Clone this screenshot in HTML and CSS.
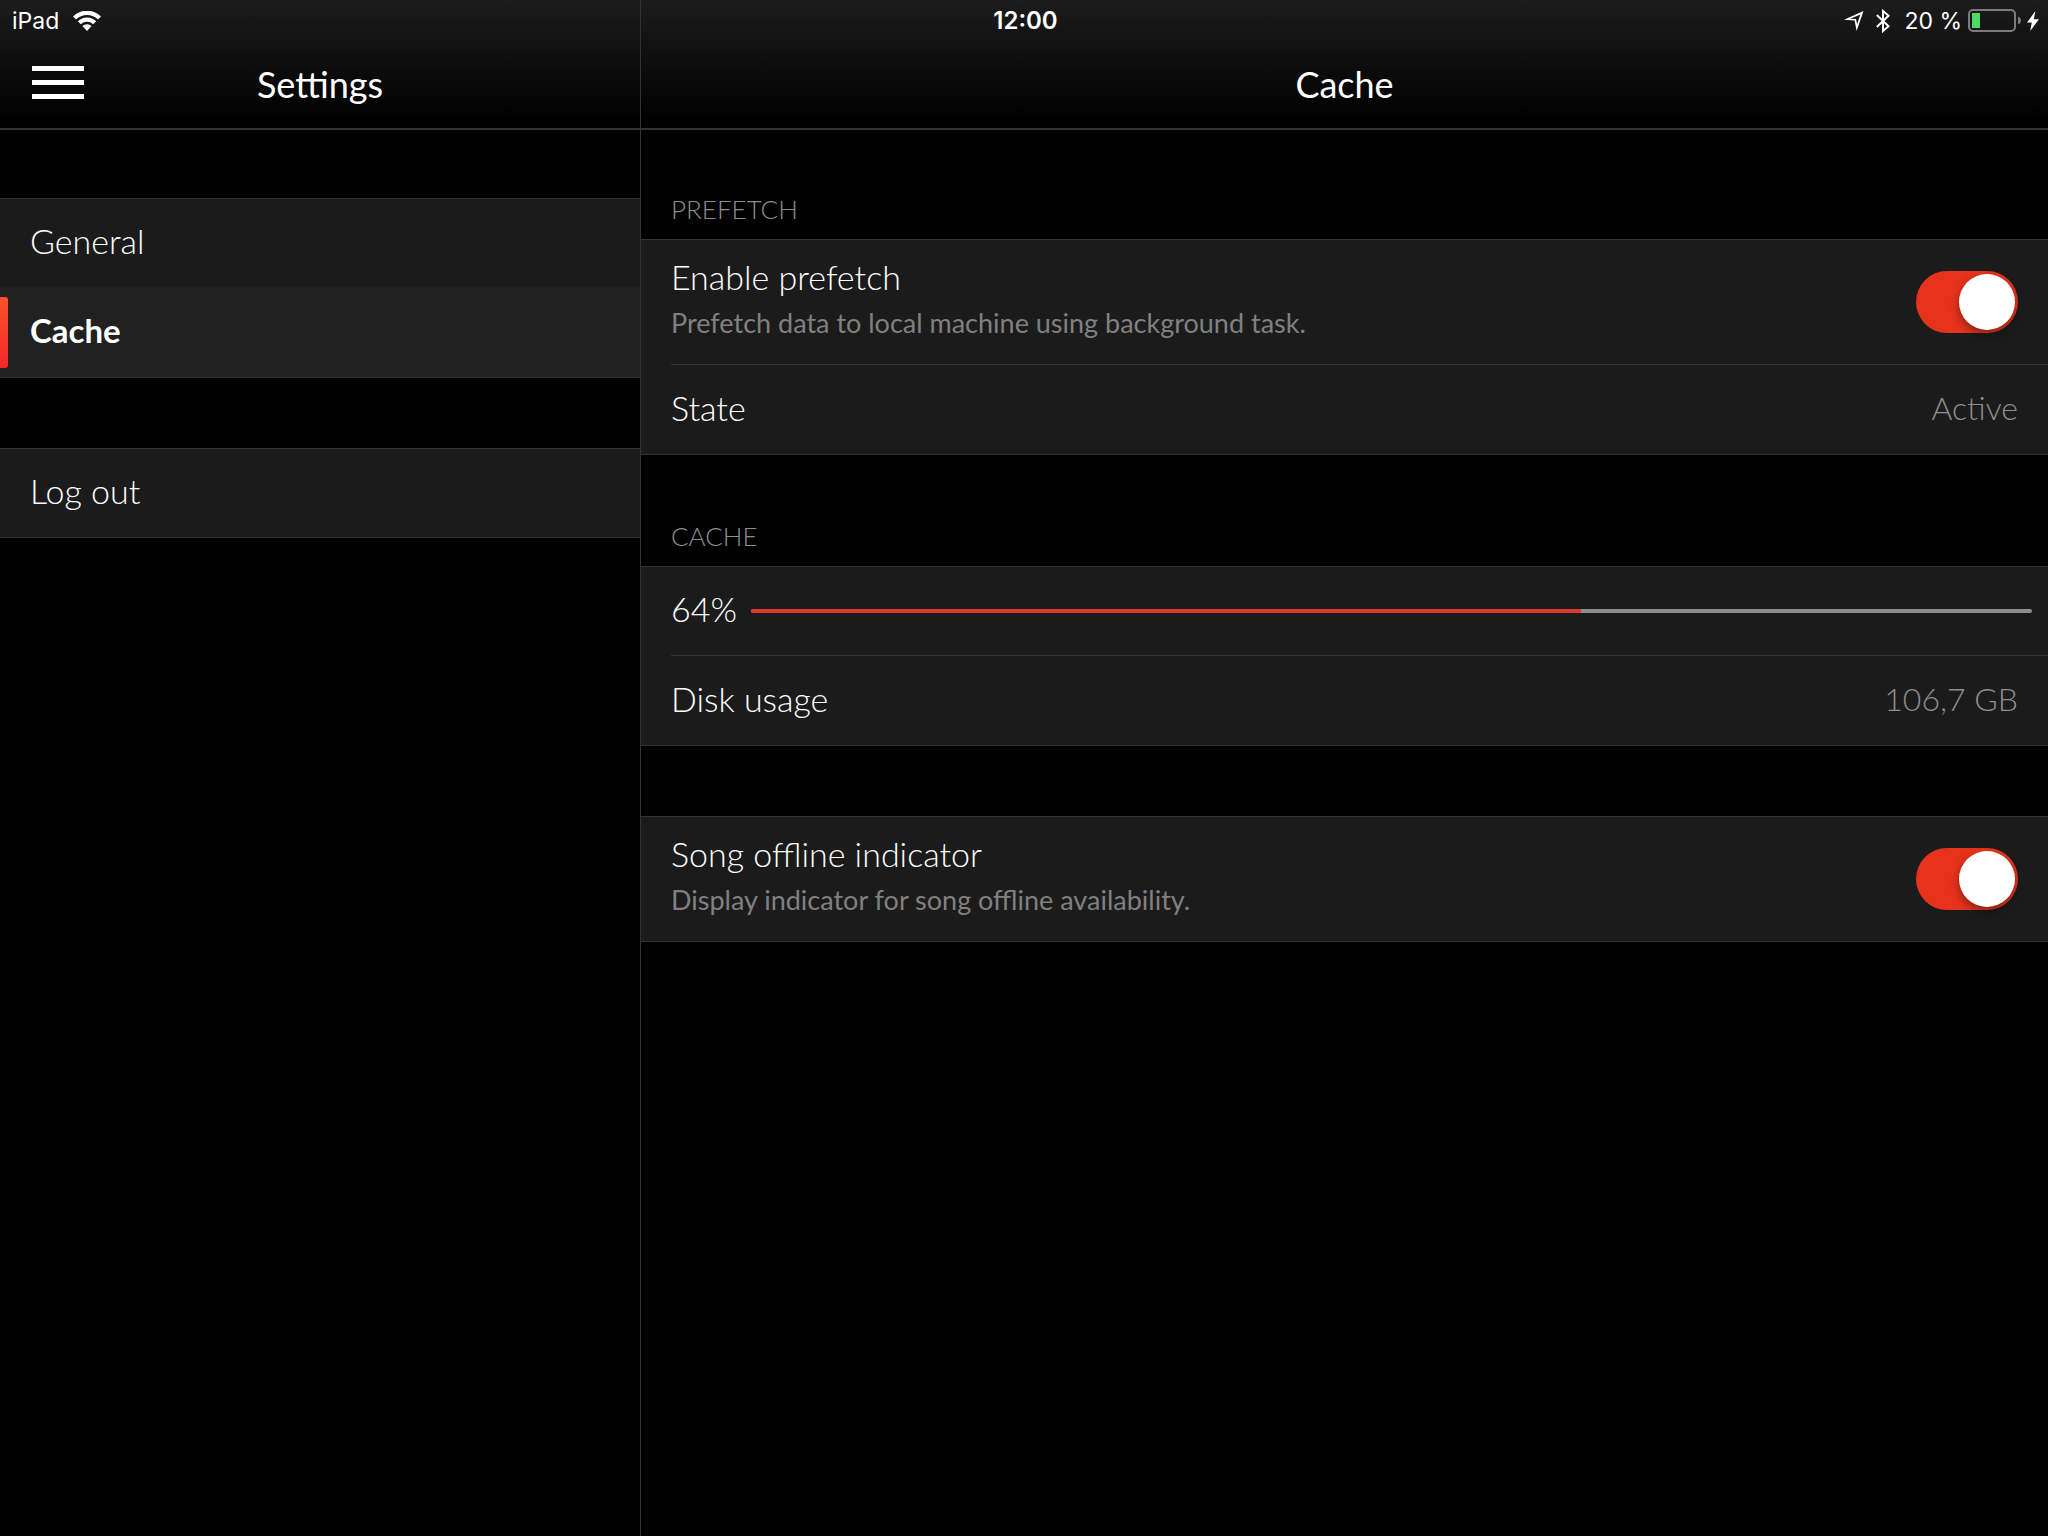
FILE: index.html
```html
<!DOCTYPE html>
<html lang="en">
<head>
<meta charset="utf-8">
<meta name="viewport" content="width=device-width, initial-scale=1">
<title>Settings – Cache</title>
<link rel="stylesheet" href="styles.css">
</head>
<body>
<div class="status-bar">
  <div class="status-left">
    <span>iPad</span>
    <svg class="icon-wifi" width="28" height="20" viewBox="0 0 28 20" aria-hidden="true">
      <path d="M0 5.4A20 20 0 0 1 28 5.4L25 8.5A15.6 15.6 0 0 0 3 8.5Z"/>
      <path d="M4.8 10.3A13 13 0 0 1 23.2 10.3L20.2 13.3A9 9 0 0 0 7.8 13.3Z"/>
      <path d="M9.4 15.1A6.6 6.6 0 0 1 18.6 15.1L14 20Z"/>
    </svg>
  </div>
  <time class="clock">12:00</time>
  <div class="status-right">
    <svg class="icon-location" width="20" height="20" viewBox="0 0 20 20" aria-hidden="true">
      <path fill-rule="evenodd" d="M19.5 0 12.6 20 10.6 9.4 0 8.8ZM16.4 3.6 6.2 7.8 12 8.1 13.1 13.2Z"/>
    </svg>
    <svg class="icon-bluetooth" width="14" height="24" viewBox="0 0 14 24" aria-hidden="true">
      <path d="M0.8 6 12.6 17.2 7 22V2L12.6 6.8 0.8 18"/>
    </svg>
    <span>20 %</span>
    <svg class="icon-battery" width="54" height="24" viewBox="0 0 54 24" aria-hidden="true">
      <rect class="battery-case" x="1" y="1" width="46" height="21" rx="4"/>
      <rect class="battery-charge" x="4" y="4" width="8" height="15"/>
      <path class="battery-cap" d="M50 7.5C54 9 54 14 50 15.5Z"/>
    </svg>
    <svg class="icon-bolt" width="12" height="20" viewBox="0 0 12 20" aria-hidden="true">
      <path d="M8.4 0 0 11.4H4.8L3.2 20 12 8.2H6.8Z"/>
    </svg>
  </div>
</div>

<div class="split-view">
  <aside class="pane">
    <header class="nav-bar">
      <button class="menu-button" type="button" aria-label="Menu"><span></span><span></span><span></span></button>
      <h1 class="title">Settings</h1>
    </header>
    <nav>
      <div class="group">
        <a class="item" href="#general">General</a>
        <a class="item selected" href="#cache" aria-current="page">Cache</a>
      </div>
      <div class="group">
        <a class="item" href="#logout">Log out</a>
      </div>
    </nav>
  </aside>

  <main class="pane detail">
    <header class="nav-bar">
      <h2 class="title">Cache</h2>
    </header>

    <section>
      <h3 class="section-title">Prefetch</h3>
      <div class="group">
        <div class="row tall">
          <label class="texts" for="prefetch">
            <span class="name">Enable prefetch</span>
            <span class="hint">Prefetch data to local machine using background task.</span>
          </label>
          <input class="switch" id="prefetch" type="checkbox" checked>
        </div>
        <div class="row">
          <span class="name">State</span>
          <span class="value">Active</span>
        </div>
      </div>
    </section>

    <section>
      <h3 class="section-title">Cache</h3>
      <div class="group">
        <div class="row progress-row">
          <label class="name" for="cache-fill">64%</label>
          <progress class="meter" id="cache-fill" max="1000" value="648"></progress>
        </div>
        <div class="row">
          <span class="name">Disk usage</span>
          <span class="value">106,7 GB</span>
        </div>
      </div>
    </section>

    <section>
      <div class="group">
        <div class="row tall">
          <label class="texts" for="indicator">
            <span class="name">Song offline indicator</span>
            <span class="hint">Display indicator for song offline availability.</span>
          </label>
          <input class="switch" id="indicator" type="checkbox" checked>
        </div>
      </div>
    </section>
  </main>
</div>
</body>
</html>
```
FILE: styles.css
```css
:root {
  --line: #333;
  --surface: #1b1b1b;
  --surface-selected: #212121;
  --muted: #8e8e8e;
  --accent: #e7331c;
}

* {
  box-sizing: border-box;
}

body {
  margin: 0;
  background: #000;
  color: #fff;
  font-family: Lato, "Open Sans", sans-serif;
  font-size: 34px;
  font-weight: 300;
  line-height: 44px;
}

h1, h2, h3 {
  margin: 0;
}

/* Status bar floats over both panes */
.status-bar {
  position: absolute;
  top: 0;
  left: 0;
  right: 0;
  z-index: 1;
  display: grid;
  grid-template-columns: 1fr auto 1fr;
  align-items: center;
  height: 42px;
  padding: 0 9px 0 12px;
  font-family: Inter, "Liberation Sans", sans-serif;
  font-size: 23px;
  font-weight: 400;
  line-height: 40px;
}

.status-bar svg {
  fill: #fff;
}

.status-left,
.status-right {
  display: flex;
  align-items: center;
}

.status-left {
  gap: 14px;
}

.status-right {
  justify-content: flex-end;
}

.clock {
  font-size: 24px;
  font-weight: 600;
}

.icon-location {
  margin-right: 12px;
}

.status-bar .icon-bluetooth {
  margin-right: 14px;
  fill: none;
  stroke: #fff;
  stroke-width: 2;
}

.icon-battery {
  margin: 0 5px 0 6px;
}

.status-bar .battery-case {
  fill: none;
  stroke: #7c7c7c;
  stroke-width: 2;
}

.status-bar .battery-charge {
  fill: #4cd964;
}

.status-bar .battery-cap {
  fill: #7c7c7c;
}

/* Panes */
.split-view {
  display: grid;
  grid-template-columns: 5fr 11fr;
  min-height: 100vh;
}

.detail {
  border-left: 1px solid var(--line);
}

.nav-bar {
  display: grid;
  grid-template-columns: 1fr auto 1fr;
  align-items: center;
  height: 128px;
  padding: 40px 30px 0;
  background: linear-gradient(#1c1c1c, #000 95%);
  box-shadow: 0 2px 0 var(--line);
}

.title {
  grid-column: 2;
  font-size: 36px;
  font-weight: 400;
}

.menu-button {
  justify-self: start;
  display: flex;
  flex-direction: column;
  gap: 9px;
  width: 54px;
  padding: 0 0 4px 2px;
  border: 0;
  background: none;
}

.menu-button span {
  height: 5px;
  background: #fff;
}

/* Grouped lists */
.group {
  border: solid var(--line);
  border-width: 1px 0;
  background: var(--surface);
}

.group:first-child,
nav .group {
  margin-top: 70px;
}

.item {
  position: relative;
  display: flex;
  align-items: center;
  min-height: 88px;
  padding: 0 30px 4px;
  color: inherit;
  text-decoration: none;
}

.item + .item {
  min-height: 90px;
}

.selected {
  background: var(--surface-selected);
  font-size: 33px;
  font-weight: 700;
}

.selected::before {
  content: "";
  position: absolute;
  left: 0;
  top: 10px;
  bottom: 9px;
  width: 8px;
  border-radius: 0 3px 3px 0;
  background: linear-gradient(#f9522d, #f52828);
}

.section-title {
  padding: 63px 30px 12px;
  color: var(--muted);
  font-size: 26px;
  font-weight: 300;
  line-height: 36px;
  text-transform: uppercase;
}

.row {
  display: flex;
  align-items: center;
  justify-content: space-between;
  min-height: 88px;
  margin-left: 30px;
  padding: 0 30px 4px 0;
}

.row + .row {
  min-height: 90px;
  border-top: 1px solid var(--line);
}

.row.tall {
  min-height: 124px;
  padding-bottom: 0;
}

.texts {
  display: flex;
  flex-direction: column;
  gap: 4px;
  padding-bottom: 6px;
}

.hint {
  color: #808080;
  font-size: 27px;
  font-weight: 400;
  line-height: 40px;
}

.value {
  color: var(--muted);
  font-size: 32px;
}

.progress-row {
  gap: 14px;
  padding: 0 16px 0 0;
}

.progress-row .name {
  padding-bottom: 4px;
}

.meter {
  flex: 1;
  appearance: none;
  height: 4px;
  border: 0;
  border-radius: 2px;
  overflow: hidden;
  background: #8e8e8e;
}

.meter::-webkit-progress-bar {
  background: #8e8e8e;
}

.meter::-webkit-progress-value {
  background: #dc3a30;
}

.switch {
  appearance: none;
  flex: none;
  width: 102px;
  height: 62px;
  margin: 0;
  padding: 3px;
  border-radius: 31px;
  background: #3a3a3a;
}

.switch::before {
  content: "";
  display: block;
  width: 56px;
  height: 56px;
  border-radius: 50%;
  background: #fff;
  box-shadow: 0 4px 10px rgb(0 0 0 / 40%);
}

.switch:checked {
  background: var(--accent);
}

.switch:checked::before {
  margin-left: auto;
}
```
